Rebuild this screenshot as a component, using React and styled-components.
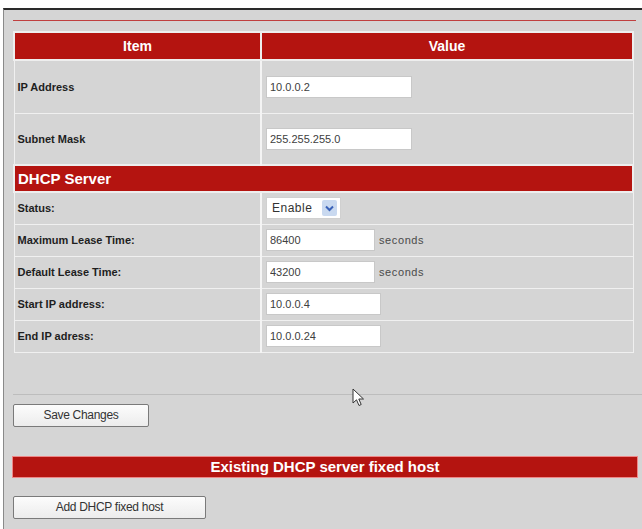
import React from "react";
import styled, { createGlobalStyle } from "styled-components";

const Global = createGlobalStyle`
  html, body {
    margin: 0;
    padding: 0;
    background: #ffffff;
    font-family: "Liberation Sans", Arial, sans-serif;
  }
`;

const rows = [
  { label: "Status:", kind: "select", value: "Enable" },
  { label: "Maximum Lease Time:", value: "86400", width: 109, unit: "seconds" },
  { label: "Default Lease Time:", value: "43200", width: 109, unit: "seconds" },
  { label: "Start IP address:", value: "10.0.0.4", width: 115 },
  { label: "End IP adress:", value: "10.0.0.24", width: 115 },
];

export default function App() {
  return (
    <>
      <Global />
      <Page>
        <Panel>
          <RedRule />
          <Table>
            <colgroup>
              <col style={{ width: 247 }} />
              <col />
            </colgroup>
            <thead>
              <tr>
                <HeadCell>Item</HeadCell>
                <HeadCell>Value</HeadCell>
              </tr>
            </thead>
            <tbody>
              <Row $h={53}>
                <Label>IP Address</Label>
                <Cell>
                  <Field $w={146} defaultValue="10.0.0.2" />
                </Cell>
              </Row>
              <Row $h={52}>
                <Label>Subnet Mask</Label>
                <Cell>
                  <Field $w={146} defaultValue="255.255.255.0" />
                </Cell>
              </Row>
              <tr>
                <SectionCell colSpan={2}>DHCP Server</SectionCell>
              </tr>
              {rows.map((r) => (
                <Row $h={32} key={r.label}>
                  <Label>{r.label}</Label>
                  <Cell>
                    {r.kind === "select" ? (
                      <Select>
                        <span>Enable</span>
                        <Arrow>
                          <svg width="9" height="7" viewBox="0 0 9 7">
                            <path
                              d="M1 1.5 L4.5 5 L8 1.5"
                              fill="none"
                              stroke="#3a62b8"
                              strokeWidth="2"
                            />
                          </svg>
                        </Arrow>
                      </Select>
                    ) : (
                      <Inline>
                        <Field $w={r.width} defaultValue={r.value} />
                        {r.unit && <Unit>{r.unit}</Unit>}
                      </Inline>
                    )}
                  </Cell>
                </Row>
              ))}
            </tbody>
          </Table>
          <Divider />
          <Button $w={136}>Save Changes</Button>
          <Bar>Existing DHCP server fixed host</Bar>
          <Button $w={193}>Add DHCP fixed host</Button>
          <Cursor>
            <svg width="14" height="20" viewBox="0 0 14 20">
              <path
                d="M1 1 L1 15 L4.5 11.8 L7 17.5 L9.2 16.5 L6.8 11 L11.5 11 Z"
                fill="#ffffff"
                stroke="#333"
                strokeWidth="1"
              />
            </svg>
          </Cursor>
        </Panel>
      </Page>
    </>
  );
}

const Page = styled.div`
  padding-top: 8px;
  height: 529px;
  box-sizing: border-box;
  overflow: hidden;
`;

const Panel = styled.div`
  position: relative;
  margin-left: 3px;
  height: 521px;
  box-sizing: border-box;
  background: #d5d5d5;
  border-top: 2px solid #2a2a2a;
  border-left: 1px solid #8a8a8a;
  padding: 10px 0 0 9px;
  display: flex;
  flex-direction: column;
  align-items: flex-start;
`;

const RedRule = styled.div`
  width: 623px;
  height: 1px;
  background: #c04040;
  margin-bottom: 10px;
`;

const Table = styled.table`
  width: 621px;
  border-collapse: collapse;
  table-layout: fixed;
  border: 1px solid #f2f2f2;
`;

const HeadCell = styled.th`
  height: 26px;
  padding: 0;
  background: #b41410;
  color: #ffffff;
  font-size: 14px;
  font-weight: bold;
  text-align: center;
  border: 2px solid #eeeeee;
`;

const Row = styled.tr`
  height: ${(p) => p.$h}px;
`;

const Label = styled.td`
  padding: 0 0 0 3px;
  font-size: 11px;
  font-weight: bold;
  color: #1e1e1e;
  border: 1px solid #f0f0f0;
  border-right: 2px solid #f4f4f4;
`;

const Cell = styled.td`
  padding: 0 0 0 4px;
  border: 1px solid #f0f0f0;
`;

const SectionCell = styled.td`
  height: 25px;
  padding: 0 0 0 3px;
  background: #b41410;
  color: #ffffff;
  font-size: 15px;
  font-weight: bold;
  border: 2px solid #eeeeee;
`;

const Inline = styled.div`
  display: flex;
  align-items: center;
  gap: 4px;
`;

const Field = styled.input`
  width: ${(p) => p.$w}px;
  height: 22px;
  box-sizing: border-box;
  border: 1px solid #c8c8c8;
  background: #ffffff;
  padding: 0 3px;
  font-family: "Liberation Sans", Arial, sans-serif;
  font-size: 11px;
  color: #404040;
  outline: none;
`;

const Unit = styled.span`
  font-size: 11px;
  color: #4a4a4a;
  letter-spacing: 0.6px;
`;

const Select = styled.div`
  width: 75px;
  height: 22px;
  box-sizing: border-box;
  background: #ffffff;
  border: 1px solid #d0d0d0;
  display: flex;
  align-items: center;
  justify-content: space-between;
  padding: 0 3px 0 5px;
  font-size: 12px;
  color: #333;
  letter-spacing: 0.5px;
`;

const Arrow = styled.span`
  width: 15px;
  height: 16px;
  background: #c9d9f0;
  border-radius: 2px;
  display: flex;
  align-items: center;
  justify-content: center;
`;

const Divider = styled.div`
  width: 629px;
  height: 1px;
  background: #bdbdbd;
  margin: 41px 0 9px 0;
`;

const Button = styled.button`
  width: ${(p) => p.$w}px;
  height: 23px;
  padding: 0;
  background: linear-gradient(#fcfcfc, #ececec);
  border: 1px solid #7a7a7a;
  border-radius: 2px;
  font-family: "Liberation Sans", Arial, sans-serif;
  font-size: 12px;
  color: #333;
  letter-spacing: -0.3px;
`;

const Bar = styled.div`
  width: 624px;
  height: 20px;
  margin: 30px 0 19px 0;
  background: #b41410;
  color: #ffffff;
  font-size: 15px;
  font-weight: bold;
  line-height: 20px;
  text-align: center;
  box-shadow: 0 0 0 1px #e88;
`;

const Cursor = styled.div`
  position: absolute;
  left: 348px;
  top: 378px;
`;
